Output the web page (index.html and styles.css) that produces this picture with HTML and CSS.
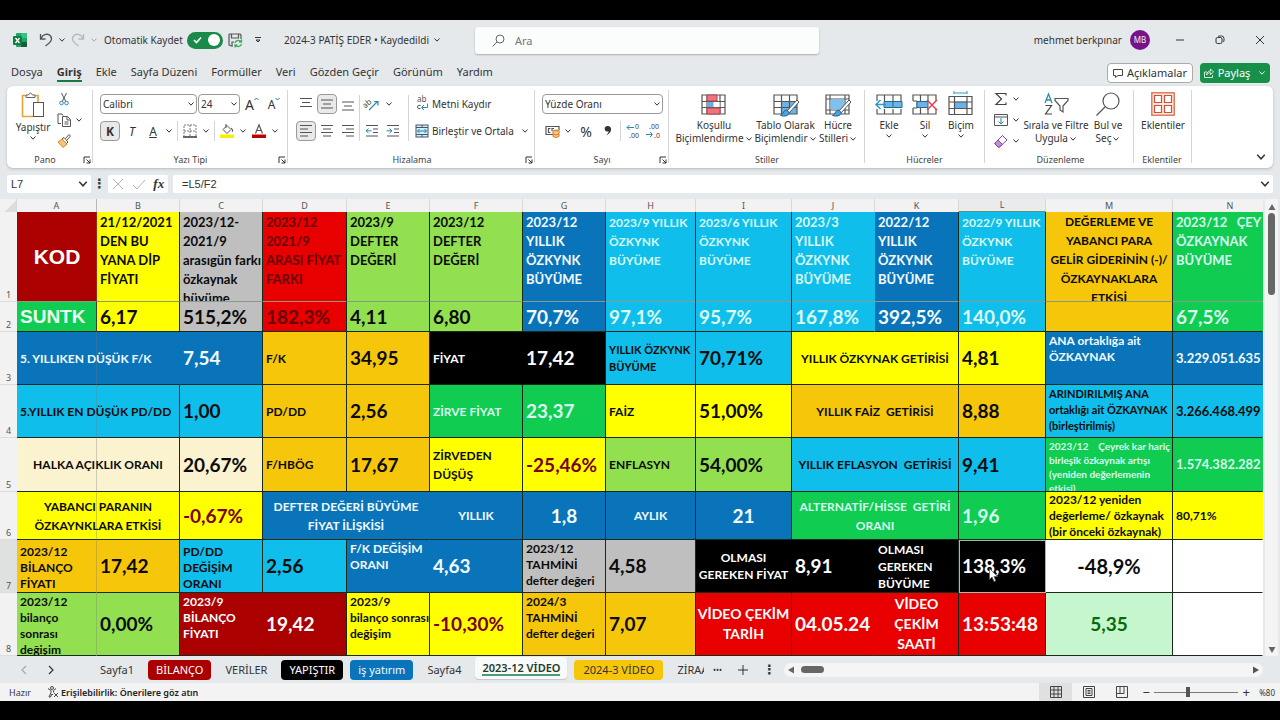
FILE: index.html
```html
<!DOCTYPE html>
<html lang="tr">
<head>
<meta charset="utf-8">
<meta name="viewport" content="width=device-width, initial-scale=1">
<title>2024-3 PATİŞ EDER</title>
<link rel="stylesheet" href="styles.css">
</head>
<body>
<svg class="defs" aria-hidden="true">
  <symbol id="chev" viewBox="0 0 8 8"><path d="M1.500 2.500 4 5.200 6.500 2.500" fill="none" stroke="currentColor"/></symbol>
  <symbol id="launch" viewBox="0 0 8 8"><path d="M1 7V1h6M3.500 3.500 7 7M7 3.500V7H3.500" fill="none" stroke="currentColor"/></symbol>
  <symbol id="grid3" viewBox="0 0 26 22"><path d="M1 1h23v19H1zM1 7.500h23M1 13.500h23M6 1v19M13 1v19M19 1v19" fill="none" stroke="#555" stroke-width="1.200"/></symbol>
</svg>
<div class="app">
  <header class="titlebar">
    <div class="quick">
      <svg class="excel" viewBox="0 0 14 14"><rect x="3" y="0" width="11" height="14" rx="1" fill="#21a366"/><path d="M8 0h5a1 1 0 0 1 1 1v4H8z" fill="#33c481"/><path d="M8 9h6v4a1 1 0 0 1-1 1H8z" fill="#185c37"/><rect y="3" width="9" height="9" rx="1" fill="#107c41"/><path d="m2.500 5 4 5m0-5-4 5" stroke="#fff" stroke-width="1.300"/></svg>
      <button class="w16" aria-label="Geri al"><svg width="14" height="14" viewBox="0 0 14 14"><path d="M1.500 1v5h5M1.800 5.600C4 1 9 0 11.500 3c3 4-1 7-5 10" fill="none" stroke="#555" stroke-width="1.300"/></svg></button>
      <button class="w12" aria-label="Geri al seçenekleri"><svg class="chev"><use href="#chev"/></svg></button>
      <button class="w16 dim" aria-label="Yinele"><svg width="14" height="14" viewBox="0 0 14 14"><path d="M12.500 1v5h-5M12.200 5.600C10 1 5 0 2.500 3c-3 4 1 7 5 10" fill="none" stroke="#b4b9bd" stroke-width="1.300"/></svg></button>
      <button class="w12 dim" aria-label="Yinele seçenekleri"><svg class="chev"><use href="#chev"/></svg></button>
      <label class="autosave"><span>Otomatik Kaydet</span><input type="checkbox" checked><span class="toggle"><svg width="9" height="8" viewBox="0 0 9 8"><path d="m1 4 2.500 2.500L8 1.500" fill="none" stroke="#fff" stroke-width="1.600"/></svg><i></i></span></label>
      <button class="w20" aria-label="Kaydet"><svg width="15" height="15" viewBox="0 0 15 15"><path d="M1 1h11l1 1v4M1 1v11l2 1h2M3.500 1v4h7V1M4 13V9h2" fill="none" stroke="#555" stroke-width="1.200"/><path d="M7 10c.5-3 5-3.500 6-1M13.500 6.500V9H11M13.500 11c-.8 3-5 3.500-6 1M7 14.500V12h2.500" fill="none" stroke="#38b45c" stroke-width="1.400"/></svg></button>
      <button class="w20" aria-label="Araç çubuğunu özelleştir"><svg class="chev" viewBox="0 0 8 8"><path d="M1 1.500h6M2 4l2 2 2-2z" fill="none" stroke="currentColor"/></svg></button>
      <button class="doc">2024-3 PATİŞ EDER • Kaydedildi <svg class="chev"><use href="#chev"/></svg></button>
    </div>
    <label class="search"><svg width="13" height="13" viewBox="0 0 13 13"><circle cx="8" cy="5" r="4" fill="none" stroke="#666"/><path d="M5 8 .5 12.500" stroke="#666"/></svg><input type="text" placeholder="Ara" aria-label="Ara"></label>
    <div class="account">
      <span>mehmet berkpınar</span><span class="avatar">MB</span>
      <button aria-label="Simge durumuna küçült"><svg width="10" height="10" viewBox="0 0 10 10"><path d="M1 5h8" stroke="#333"/></svg></button>
      <button aria-label="Geri yükle"><svg width="10" height="10" viewBox="0 0 10 10"><rect x="1" y="2.500" width="6" height="6" rx="1.500" fill="none" stroke="#333"/><path d="M3 1.500Q3.500 1 5 1h1.500Q9 1 9 3.500V5q0 1.500-.8 2" fill="none" stroke="#333"/></svg></button>
      <button aria-label="Kapat"><svg width="10" height="10" viewBox="0 0 10 10"><path d="m1 1 8 8m0-8L1 9" stroke="#333"/></svg></button>
    </div>
  </header>
  <nav class="menu">
    <a href="#">Dosya</a><a href="#" class="on">Giriş</a><a href="#">Ekle</a><a href="#">Sayfa Düzeni</a><a href="#">Formüller</a><a href="#">Veri</a><a href="#">Gözden Geçir</a><a href="#">Görünüm</a><a href="#">Yardım</a>
    <div class="actions">
      <button class="comments"><svg width="10" height="10" viewBox="0 0 10 10"><path d="M.5 1.500h9v6H5L2.500 9.500v-2h-2z" fill="none" stroke="#444"/></svg>Açıklamalar</button>
      <button class="share"><svg width="10" height="10" viewBox="0 0 10 10"><path d="M3 4H.5v5.500h8V7M2.500 7C3 4.500 4 3 6.500 3V1L9.500 4 6.500 6.500V4.700C4.500 4.700 3.500 5.500 2.500 7" fill="none" stroke="#fff" stroke-width=".8"/></svg>Paylaş<svg class="chev"><use href="#chev"/></svg></button>
    </div>
  </nav>

  <section class="ribbon" aria-label="Giriş şeridi">
    <div class="group pano">
      <div class="body">
        <button class="big wide48"><svg width="24" height="26" viewBox="0 0 24 26"><path d="M6 3.500H1.500v21H12M17 10V3.500h-4" fill="none" stroke="#e8a33d" stroke-width="1.600"/><path d="M5 5.500V3h2.500Q9.500-1 11.500 3H14v2.500z" fill="#fff" stroke="#666"/><rect x="12.500" y="10.500" width="10" height="14" fill="#fff" stroke="#555"/></svg><span>Yapıştır</span><svg class="chev"><use href="#chev"/></svg></button>
        <div class="stack">
          <button aria-label="Kes"><svg width="14" height="14" viewBox="0 0 14 14"><path d="M4.500 1 9 10M9.500 1 5 10" stroke="#555"/><circle cx="4.500" cy="11" r="1.800" fill="none" stroke="#2b8cc4"/><circle cx="9.500" cy="11" r="1.800" fill="none" stroke="#2b8cc4"/></svg></button>
          <button aria-label="Kopyala"><svg width="14" height="14" viewBox="0 0 14 14"><path d="M4 10.500H1V1h4l1 1.500M5.500 3.500h5l3 3v7h-8zM10 4v3h3M7.500 9h4M7.500 11h4" fill="none" stroke="#555"/></svg><svg class="chev"><use href="#chev"/></svg></button>
          <button aria-label="Biçim boyacısı"><svg width="14" height="14" viewBox="0 0 14 14"><path d="m1 8 4-3 5 5-4 3.500z" fill="#f6c37a" stroke="#d88620"/><path d="m5 5 2-1.500L11 8l-1.500 1.500M8.500 4.500l3.500-4 1.500 1.500-3.500 4" fill="none" stroke="#555"/></svg></button>
        </div>
      </div>
      <div class="caption"><span>Pano</span><svg class="launch"><use href="#launch"/></svg></div>
    </div>
    <div class="group yazi">
      <div class="body rows">
        <div class="line">
          <label class="pick font"><select aria-label="Yazı tipi"><option>Calibri</option></select><svg class="chev"><use href="#chev"/></svg></label>
          <label class="pick size"><select aria-label="Yazı boyutu"><option>24</option></select><svg class="chev"><use href="#chev"/></svg></label>
          <button class="w20 grow" aria-label="Yazı boyutunu artır">A<svg width="5" height="4" viewBox="0 0 5 4"><path d="M.5 3 2.500 1l2 2" fill="none" stroke="#1b7fae"/></svg></button>
          <button class="w20 shrink" aria-label="Yazı boyutunu azalt">A<svg width="5" height="4" viewBox="0 0 5 4"><path d="m.5 1 2 2 2-2" fill="none" stroke="#1b7fae"/></svg></button>
        </div>
        <div class="line">
          <button class="w20 sel bold">K</button><button class="w20 ital">T</button><button class="w20 under">A</button><button class="w12" aria-label="Altı çizili seçenekleri"><svg class="chev"><use href="#chev"/></svg></button><hr>
          <button class="w20" aria-label="Kenarlıklar"><svg width="14" height="14" viewBox="0 0 14 14"><path d="M1 1h12v12H1zM7 1v12M1 7h12" fill="none" stroke="#777" stroke-dasharray="2 1"/><path d="M0 13h14" stroke="#444" stroke-width="1.500"/></svg></button><button class="w12" aria-label="Kenarlık seçenekleri"><svg class="chev"><use href="#chev"/></svg></button><hr>
          <button class="w20" aria-label="Dolgu rengi"><svg width="14" height="14" viewBox="0 0 14 14"><path d="m3 5.500 4-4 4 4-4 4zM6 0v4M11 4c2 1 2 3 1 4" fill="none" stroke="#555"/><path d="M0 10.500h14V14H0z" fill="#f7f000"/></svg></button><button class="w12" aria-label="Dolgu seçenekleri"><svg class="chev"><use href="#chev"/></svg></button>
          <button class="w20" aria-label="Yazı rengi"><svg width="14" height="14" viewBox="0 0 14 14"><path d="M3.500 9.500 7 .8l3.500 8.700M4.500 6.500h5" fill="none" stroke="#555" stroke-width="1.200"/><path d="M0 10.500h14V14H0z" fill="#c00000"/></svg></button><button class="w12" aria-label="Yazı rengi seçenekleri"><svg class="chev"><use href="#chev"/></svg></button>
        </div>
      </div>
      <div class="caption"><span>Yazı Tipi</span><svg class="launch"><use href="#launch"/></svg></div>
    </div>
    <div class="group hiza">
      <div class="body">
        <div class="rows">
          <div class="line"><button class="w20" aria-label="Üste hizala"><svg class="ic" viewBox="0 0 14 14"><path d="M1 1.500h12M3 5.500h8M1 9.500h12"/></svg></button><button class="w20 sel" aria-label="Ortaya hizala"><svg class="ic" viewBox="0 0 14 14"><path d="M1 3h12M3 7h8M1 11h12"/></svg></button><button class="w20" aria-label="Alta hizala"><svg class="ic" viewBox="0 0 14 14"><path d="M1 5h12M3 9h8M1 13h12"/></svg></button></div>
          <div class="line"><button class="w20 sel" aria-label="Sola hizala"><svg class="ic" viewBox="0 0 14 14"><path d="M1 1.500h12M1 5h8M1 8.500h12M1 12h8"/></svg></button><button class="w20" aria-label="Ortala"><svg class="ic" viewBox="0 0 14 14"><path d="M1 1.500h12M3 5h8M1 8.500h12M3 12h8"/></svg></button><button class="w20" aria-label="Sağa hizala"><svg class="ic" viewBox="0 0 14 14"><path d="M1 1.500h12M5 5h8M1 8.500h12M5 12h8"/></svg></button></div>
        </div>
        <hr class="tall">
        <div class="rows">
          <div class="line"><button class="w20" aria-label="Yönlendirme"><svg width="14" height="14" viewBox="0 0 14 14"><text x="-2" y="8" font-size="8" transform="rotate(-42 4 7)" fill="#444">ab</text><path d="m4 13 8.500-8.500M9 4.500h4v4" fill="none" stroke="#2b8cae" stroke-width="1.200"/></svg></button><button class="w12" aria-label="Yönlendirme seçenekleri"><svg class="chev"><use href="#chev"/></svg></button></div>
          <div class="line"><button class="w20" aria-label="Girintiyi azalt"><svg class="ic" viewBox="0 0 14 14"><path d="M1 1.500h12M8 5h5M8 8.500h5M1 12h12"/><path class="tl" d="M6.500 6.800H1M3.500 4.500 1 6.800 3.500 9"/></svg></button><button class="w20" aria-label="Girintiyi artır"><svg class="ic" viewBox="0 0 14 14"><path d="M1 1.500h12M8 5h5M8 8.500h5M1 12h12"/><path class="tl" d="M.5 6.800H6M3.500 4.500 6 6.800 3.500 9"/></svg></button></div>
        </div>
        <hr class="tall gapped">
        <div class="rows">
          <div class="line"><button class="text"><svg width="14" height="14" viewBox="0 0 14 14"><text x="2" y="5" font-size="8" fill="#555">ab</text><path d="M5.500 8.500q-3-1-3 1.500t3 1.500" fill="none" stroke="#555"/><path d="M12.500 6.500v4H7M9 8l-2.500 2.500L9 13" fill="none" stroke="#2b8cae"/></svg>Metni Kaydır</button></div>
          <div class="line"><button class="text"><svg width="14" height="14" viewBox="0 0 14 14"><rect x="1" y="1" width="12" height="12" fill="#d6eefa" stroke="#456"/><path d="M1 3.500h12M1 10.500h12M7 1v2.500M7 10.500V13" stroke="#456"/><path d="M2.500 7h9M4.500 5l-2 2 2 2M9.500 5l2 2-2 2" fill="none" stroke="#1a84b8"/></svg>Birleştir ve Ortala</button><button class="w12" aria-label="Birleştirme seçenekleri"><svg class="chev"><use href="#chev"/></svg></button></div>
        </div>
      </div>
      <div class="caption"><span>Hizalama</span><svg class="launch"><use href="#launch"/></svg></div>
    </div>
    <div class="group sayi">
      <div class="body rows">
        <div class="line"><label class="pick fmt"><select aria-label="Sayı biçimi"><option>Yüzde Oranı</option></select><svg class="chev"><use href="#chev"/></svg></label></div>
        <div class="line">
          <button class="w20" aria-label="Para birimi"><svg width="15" height="14" viewBox="0 0 15 14"><path d="M8 10.500H1v-8h13v4M5.500 4.500H3.500v4h2M9 4.500H7v2.500" fill="none" stroke="#555" stroke-width="1.200"/><ellipse cx="11" cy="7.500" rx="3" ry="1.500" fill="#f4a340" stroke="#d87a20"/><path d="M8 7.500v5q3 2 6 0v-5M8 10q3 2 6 0" fill="#f8c88c" stroke="#d87a20"/></svg></button><button class="w12" aria-label="Para birimi seçenekleri"><svg class="chev"><use href="#chev"/></svg></button>
          <button class="w20 pct">%</button><button class="w20 comma" aria-label="Virgül biçimi"><svg width="8" height="12" viewBox="0 0 8 12"><path d="M4 1a2.800 2.800 0 1 0 .8 5.200Q4.500 8.500 2 10.500 7.500 8 7 3.800 6.500 1 4 1z" fill="#333"/></svg></button><hr>
          <button class="w20" aria-label="Ondalık artır"><svg width="14" height="14" viewBox="0 0 14 14"><text x="9" y="5" font-size="7" fill="#444">0</text><text x="3" y="14" font-size="7" fill="#444">.00</text><path d="M8 3.500H1M3.500 1 1 3.500 3.500 6" fill="none" stroke="#2b8cae"/></svg></button><button class="w20" aria-label="Ondalık azalt"><svg width="14" height="14" viewBox="0 0 14 14"><text x="3" y="5" font-size="7" fill="#444">.00</text><text x="8" y="14" font-size="7" fill="#444">.0</text><path d="M0 10.500h6M4 8l2.500 2.500L4 13" fill="none" stroke="#2b8cae"/></svg></button>
        </div>
      </div>
      <div class="caption"><span>Sayı</span><svg class="launch"><use href="#launch"/></svg></div>
    </div>
    <div class="group stil">
      <div class="body">
        <button class="big wide76"><svg class="bigic" viewBox="0 0 26 22"><use href="#grid3" width="26" height="22"/><path d="M6 1h10v6H6zM6 14h13v6H6z" fill="#f2727d" stroke="#b04450"/><path d="M6 8h6v5H6z" fill="#6aaede"/><path d="M12.500 8h6v5h-6z" fill="#fff"/></svg><span>Koşullu</span><span>Biçimlendirme<svg class="chev"><use href="#chev"/></svg></span></button>
        <button class="big wide66"><svg class="bigic" viewBox="0 0 26 22"><path d="M8 8h16v12H8z" fill="#6ab4ea"/><path d="M1 1h23v19H1zM1 7.500h23M1 13.500h23M8.500 1v19M16.500 1v19" fill="none" stroke="#555" stroke-width="1.200"/><path d="M24 6 14 17l2 2L26 8z" fill="#fff" stroke="#555"/><path d="M14 16q-3 0-4 3-1 2-2.500 2.500Q14 23.500 16.500 19z" fill="#4da3df" stroke="#27658c"/></svg><span>Tablo Olarak</span><span>Biçimlendir<svg class="chev"><use href="#chev"/></svg></span></button>
        <button class="big wide40"><svg class="bigic" viewBox="0 0 26 22"><path d="M1 1h23v19H1zM1 5h23M1 16h23M5 1v19M20 1v19" fill="none" stroke="#555" stroke-width="1.200"/><path d="M5.500 5.500h14v10h-14z" fill="#80c0ef"/><path d="M24 6 14 17l2 2L26 8z" fill="#fff" stroke="#555"/><path d="M14 16q-3 0-4 3-1 2-2.500 2.500Q14 23.500 16.500 19z" fill="#4da3df" stroke="#27658c"/></svg><span>Hücre</span><span>Stilleri<svg class="chev"><use href="#chev"/></svg></span></button>
      </div>
      <div class="caption"><span>Stiller</span></div>
    </div>
    <div class="group hucre">
      <div class="body">
        <button class="big wide36"><svg class="bigic" viewBox="0 0 26 22"><path d="M1 7V1h24v6M1 15v5h24v-5M8.500 1v6M17 1v6M8.500 15v5M17 15v5" fill="none" stroke="#555" stroke-width="1.200"/><path d="M8 7.500h18v6H8z" fill="#6ab4ea" stroke="#28698f"/><path d="M17 7v7" stroke="#28698f"/><path d="M10 10.500H0M4.500 6 0 10.500 4.500 15" fill="none" stroke="#2b9cc4" stroke-width="1.500"/></svg><span>Ekle</span><svg class="chev"><use href="#chev"/></svg></button>
        <button class="big wide36"><svg class="bigic" viewBox="0 0 26 22"><path d="M1 7V1h23v6M1 14v6h23v-5M8.500 1v6M16 1v6M8.500 14v6M16 14v6" fill="none" stroke="#555" stroke-width="1.200"/><path d="M1 7h4v7H1" fill="none" stroke="#555"/><path d="M5 7.500h11v6H5z" fill="#6ab4ea" stroke="#28698f"/><path d="m15 6 10 10m0-10L15 16" stroke="#e0424d" stroke-width="1.500"/></svg><span>Sil</span><svg class="chev"><use href="#chev"/></svg></button>
        <button class="big wide36"><svg class="bigic" viewBox="0 0 26 22"><path d="M6 7.500h13v7H6z" fill="#6ab4ea"/><path d="M1 2.500h23v18H1zM1 8h23M1 14.500h23M6.500 2.500v18M19 2.500v18" fill="none" stroke="#555" stroke-width="1.200"/><path d="M6 -1h13M6-3v3M19-3v3" stroke="#2b9cc4"/></svg><span>Biçim</span><svg class="chev"><use href="#chev"/></svg></button>
      </div>
      <div class="caption"><span>Hücreler</span></div>
    </div>
    <div class="group duzen">
      <div class="body">
        <div class="stack">
          <button aria-label="Otomatik toplam"><svg width="14" height="14" viewBox="0 0 14 14"><path d="M12 3.500V1.500H2L7.500 7 2 12.500h10v-2" fill="none" stroke="#444" stroke-width="1.200"/></svg><svg class="chev"><use href="#chev"/></svg></button>
          <button aria-label="Dolgu"><svg width="14" height="14" viewBox="0 0 14 14"><path d="M.5 1.500h13v11H.5zM.5 4h13" fill="none" stroke="#555"/><path d="M7 5v6M4.500 8.500 7 11l2.500-2.500" fill="none" stroke="#2085ad"/></svg><svg class="chev"><use href="#chev"/></svg></button>
          <button aria-label="Temizle"><svg width="14" height="14" viewBox="0 0 14 14"><path d="M1 9 8.500 1.500 13 6l-7.500 7H4L1 10z" fill="#fff" stroke="#84479b"/><path d="m1 9 3-3 4.500 4.500-3 2.500H4L1 10z" fill="#c98adb" stroke="#84479b"/></svg><svg class="chev"><use href="#chev"/></svg></button>
        </div>
        <button class="big wide68"><svg width="26" height="24" viewBox="0 0 26 24"><path d="M2 11 5.500 2 9 11M3.300 8h4.500" fill="none" stroke="#2b8cae" stroke-width="1.300"/><path d="M2.500 13.500h6l-6 8.500h6.500" fill="none" stroke="#444" stroke-width="1.200"/><path d="M12 6.500h13v2L20 14v6l-3-2v-4L12 8.500z" fill="none" stroke="#555" stroke-width="1.200"/></svg><span>Sırala ve Filtre</span><span>Uygula<svg class="chev"><use href="#chev"/></svg></span></button>
        <button class="big wide36"><svg width="26" height="24" viewBox="0 0 26 24"><circle cx="16" cy="9" r="8" fill="none" stroke="#555" stroke-width="1.200"/><path d="m10 15-8.500 8.500" stroke="#555" stroke-width="1.200"/></svg><span>Bul ve</span><span>Seç<svg class="chev"><use href="#chev"/></svg></span></button>
      </div>
      <div class="caption"><span>Düzenleme</span></div>
    </div>
    <div class="group eklenti">
      <div class="body">
        <button class="big wide48"><svg width="24" height="24" viewBox="0 0 24 24"><rect x=".8" y=".8" width="22.400" height="22.400" fill="#fde6dc" stroke="#d9694a" stroke-width="1.300"/><path d="M3.500 3.500h7v7h-7zM13.500 3.500h7v7h-7zM3.500 13.500h7v7h-7zM13.500 13.500h7v7h-7z" fill="#fff" stroke="#c4553a" stroke-width="1.200"/></svg><span>Eklentiler</span></button>
      </div>
      <div class="caption"><span>Eklentiler</span></div>
    </div>
    <button class="collapse" aria-label="Şeridi daralt"><svg width="12" height="12"><use href="#chev"/></svg></button>
  </section>

  <div class="formula">
    <label class="namebox"><input type="text" value="L7" aria-label="Ad kutusu"><svg width="12" height="12"><use href="#chev"/></svg></label>
    <span class="vdots">⋮</span>
    <div class="fxbox"><button aria-label="İptal"><svg width="12" height="12" viewBox="0 0 12 12"><path d="m1 1 10 10m0-10L1 11" stroke="#b5b5b5"/></svg></button><button aria-label="Gir"><svg width="14" height="12" viewBox="0 0 14 12"><path d="m1 7 4 4 8-9" fill="none" stroke="#b5b5b5"/></svg></button><button class="fx">fx</button></div>
    <label class="fbar"><input type="text" value="=L5/F2" aria-label="Formül çubuğu"><svg width="12" height="12"><use href="#chev"/></svg></label>
  </div>

  <main class="sheet">
    <div class="cells">
      <table>
        <colgroup><col class="k0"><col class="k80"><col class="k83"><col class="k83"><col class="k84"><col class="k83"><col class="k93"><col class="k83"><col class="k90"><col class="k96"><col class="k83"><col class="k84"><col class="k87"><col class="k127"><col></colgroup>
        <thead><tr><th class="corner"></th><th>A</th><th>B</th><th>C</th><th>D</th><th>E</th><th>F</th><th>G</th><th>H</th><th>I</th><th>J</th><th>K</th><th class="cur">L</th><th>M</th><th class="wn">N</th></tr></thead>
        <tbody>
        <tr class="r1"><th><div>1</div></th>
          <td class="maroon kod mid nb"><div>KOD</div></td>
          <td class="yellow"><div>21/12/2021<br>DEN BU<br>YANA DİP<br>FİYATI</div></td>
          <td class="gray"><div>2023/12-<br>2021/9<br>arasıgün farkı<br>özkaynak<br>büyüme</div></td>
          <td class="red darktext"><div>2023/12<br>2021/9<br>ARASI FİYAT<br>FARKI</div></td>
          <td class="lime"><div>2023/9<br>DEFTER<br>DEĞERİ</div></td>
          <td class="lime"><div>2023/12<br>DEFTER<br>DEĞERİ</div></td>
          <td class="blue"><div>2023/12<br>YILLIK<br>ÖZKYNK<br>BÜYÜME</div></td>
          <td class="cyan pale caps"><div>2023/9 YILLIK<br>ÖZKYNK<br>BÜYÜME</div></td>
          <td class="cyan pale caps"><div>2023/6 YILLIK<br>ÖZKYNK<br>BÜYÜME</div></td>
          <td class="cyan pale nb"><div>2023/3<br>YILLIK<br>ÖZKYNK<br>BÜYÜME</div></td>
          <td class="blue"><div>2022/12<br>YILLIK<br>ÖZKYNK<br>BÜYÜME</div></td>
          <td class="cyan pale caps"><div>2022/9 YILLIK<br>ÖZKYNK<br>BÜYÜME</div></td>
          <td class="orange ctr caps"><div>DEĞERLEME VE<br>YABANCI PARA<br>GELİR GİDERİNİN (-)/<br>ÖZKAYNAKLARA<br>ETKİSİ</div></td>
          <td class="green pale nb"><div>2023/12   ÇEYREK<br>ÖZKAYNAK<br>BÜYÜME</div></td></tr>
        <tr class="r2"><th><div>2</div></th>
          <td class="green suntk mid"><div>SUNTK</div></td><td class="yellow num"><div>6,17</div></td><td class="gray num"><div>515,2%</div></td><td class="red num darktext"><div>182,3%</div></td><td class="lime num"><div>4,11</div></td><td class="lime num"><div>6,80</div></td><td class="blue num"><div>70,7%</div></td><td class="cyan pale num"><div>97,1%</div></td><td class="cyan pale num"><div>95,7%</div></td><td class="cyan pale num nb"><div>167,8%</div></td><td class="blue num"><div>392,5%</div></td><td class="cyan pale num"><div>140,0%</div></td><td class="orange"><div></div></td><td class="green pale num nb"><div>67,5%</div></td></tr>
        <tr class="r3"><th><div>3</div></th>
          <td colspan="2" class="blue mid nb"><div>5. YILLIKEN DÜŞÜK F/K</div></td><td class="blue num"><div>7,54</div></td><td class="orange mid"><div>F/K</div></td><td class="orange num"><div>34,95</div></td><td class="black mid nb"><div>FİYAT</div></td><td class="black num"><div>17,42</div></td><td class="cyan small17 mid"><div>YILLIK ÖZKYNK<br>BÜYÜME</div></td><td class="cyan num"><div>70,71%</div></td><td colspan="2" class="yellow mid ctr"><div>YILLIK ÖZKYNAK GETİRİSİ</div></td><td class="yellow num"><div>4,81</div></td><td class="blue small"><div>ANA ortaklığa ait<br>ÖZKAYNAK</div></td><td class="blue mid long nb"><div>3.229.051.635</div></td></tr>
        <tr class="r4"><th><div>4</div></th>
          <td colspan="2" class="cyan mid"><div>5.YILLIK EN DÜŞÜK PD/DD</div></td><td class="cyan num"><div>1,00</div></td><td class="orange mid"><div>PD/DD</div></td><td class="orange num"><div>2,56</div></td><td class="green pale mid"><div>ZİRVE FİYAT</div></td><td class="green pale num"><div>23,37</div></td><td class="yellow mid"><div>FAİZ</div></td><td class="yellow num"><div>51,00%</div></td><td colspan="2" class="orange mid ctr"><div>YILLIK FAİZ  GETİRİSİ</div></td><td class="orange num"><div>8,88</div></td><td class="cyan small16"><div>ARINDIRILMIŞ ANA<br>ortaklığı ait ÖZKAYNAK<br>(birleştirilmiş)</div></td><td class="cyan mid long nb"><div>3.266.468.499</div></td></tr>
        <tr class="r5"><th><div>5</div></th>
          <td colspan="2" class="cream mid ctr"><div>HALKA AÇIKLIK ORANI</div></td><td class="cream num"><div>20,67%</div></td><td class="orange mid"><div>F/HBÖG</div></td><td class="orange num"><div>17,67</div></td><td class="yellow mid"><div>ZİRVEDEN<br>DÜŞÜŞ</div></td><td class="yellow num neg"><div>-25,46%</div></td><td class="lime mid"><div>ENFLASYN</div></td><td class="lime num"><div>54,00%</div></td><td colspan="2" class="cyan mid ctr"><div>YILLIK EFLASYON  GETİRİSİ</div></td><td class="cyan num"><div>9,41</div></td><td class="green pale tiny"><div>2023/12    Çeyrek kar hariç<br>birleşik özkaynak artışı<br>(yeniden değerlemenin<br>etkisi)</div></td><td class="green pale mid long nb"><div>1.574.382.282</div></td></tr>
        <tr class="r6"><th><div>6</div></th>
          <td colspan="2" class="yellow mid ctr"><div>YABANCI PARANIN<br>ÖZKAYNKLARA ETKİSİ</div></td><td class="yellow num neg"><div>-0,67%</div></td><td colspan="2" class="blue mid ctr nb"><div>DEFTER DEĞERİ BÜYÜME<br>FİYAT İLİŞKİSİ</div></td><td class="blue mid ctr"><div>YILLIK</div></td><td class="blue num ctr"><div>1,8</div></td><td class="blue mid ctr"><div>AYLIK</div></td><td class="blue num ctr"><div>21</div></td><td colspan="2" class="green pale mid ctr"><div>ALTERNATİF/HİSSE  GETİRİ<br>ORANI</div></td><td class="green pale num"><div>1,96</div></td><td class="yellow small mid"><div>2023/12 yeniden<br>değerleme/ özkaynak<br>(bir önceki özkaynak)</div></td><td class="yellow mid small nb"><div>80,71%</div></td></tr>
        <tr class="r7"><th class="cur"><div>7</div></th>
          <td class="orange small bot nb"><div>2023/12<br>BİLANÇO<br>FİYATI</div></td><td class="orange num"><div>17,42</div></td><td class="cyan small bot"><div>PD/DD<br>DEĞİŞİM<br>ORANI</div></td><td class="cyan num"><div>2,56</div></td><td class="blue small nb"><div>F/K DEĞİŞİM<br>ORANI</div></td><td class="blue num"><div>4,63</div></td><td class="gray small"><div>2023/12<br>TAHMİNİ<br>defter değeri</div></td><td class="gray num"><div>4,58</div></td><td class="black caps17 mid ctr nb"><div>OLMASI<br>GEREKEN FİYAT</div></td><td class="black num nb"><div>8,91</div></td><td class="black caps17 mid"><div>OLMASI<br>GEREKEN<br>BÜYÜME</div></td><td class="black num active"><div>138,3%</div><svg class="pointer" viewBox="0 0 9 14"><path d="M.5.5v11L3 9l2 4.500 1.800-.8L5 8.500h3.500z" fill="#fff" stroke="#555" stroke-width=".7"/></svg></td><td class="white num big20 ctr"><div>-48,9%</div></td><td class="white nb"><div></div></td></tr>
        <tr class="r8"><th><div>8</div></th>
          <td class="lime small nb"><div>2023/12<br>bilanço<br>sonrası<br>değişim</div></td><td class="lime num"><div>0,00%</div></td><td class="maroon small nb"><div>2023/9<br>BİLANÇO<br>FİYATI</div></td><td class="maroon num"><div>19,42</div></td><td class="yellow small"><div>2023/9<br>bilanço sonrası<br>değişim</div></td><td class="yellow num neg"><div>-10,30%</div></td><td class="orange small"><div>2024/3<br>TAHMİNİ<br>defter değeri</div></td><td class="orange num"><div>7,07</div></td><td class="red video mid ctr"><div>VİDEO ÇEKİM<br>TARİH</div></td><td class="red num nb"><div>04.05.24</div></td><td class="red video mid ctr"><div>VİDEO<br>ÇEKİM<br>SAATİ</div></td><td class="red num"><div>13:53:48</div></td><td class="mint num ctr"><div>5,35</div></td><td class="white nb"><div></div></td></tr>
        </tbody>
      </table>
      <i class="freeze"></i>
    </div>
    <div class="vscroll"><svg width="8" height="8" viewBox="0 0 8 8"><path d="M4 1 7.500 7h-7z" fill="#666"/></svg><i></i><svg width="8" height="8" viewBox="0 0 8 8"><path d="M4 7 7.500 1h-7z" fill="#666"/></svg></div>
  </main>

  <nav class="tabs">
    <button class="nav dim" aria-label="Önceki sayfa"><svg width="8" height="10" viewBox="0 0 8 10"><path d="M6 1 2 5l4 4" fill="none" stroke="currentColor" stroke-width="1.200"/></svg></button>
    <button class="nav" aria-label="Sonraki sayfa"><svg width="8" height="10" viewBox="0 0 8 10"><path d="m2 1 4 4-4 4" fill="none" stroke="currentColor" stroke-width="1.200"/></svg></button>
    <button class="tab first">Sayfa1</button><button class="tab maroon">BİLANÇO</button><button class="tab">VERİLER</button><button class="tab black">YAPIŞTIR</button><button class="tab blue">iş yatırım</button><button class="tab">Sayfa4</button><button class="tab current"><span>2023-12 VİDEO</span></button><button class="tab orange wide">2024-3 VİDEO</button><button class="tab cut">ZİRAAT</button>
    <button class="tool" aria-label="Diğer sayfalar">•••</button><button class="tool plus" aria-label="Yeni sayfa"><svg width="10" height="10" viewBox="0 0 10 10"><path d="M5 0v10M0 5h10" stroke="#333"/></svg></button><span class="tool vdots">⋮</span>
    <div class="hscroll"><svg width="8" height="8" viewBox="0 0 8 8"><path d="M1 4 7 .5v7z" fill="#666"/></svg><i></i><svg class="end" width="8" height="8" viewBox="0 0 8 8"><path d="M7 4 1 .5v7z" fill="#555"/></svg></div>
  </nav>
  <footer class="status">
    <span>Hazır</span>
    <svg width="12" height="12" viewBox="0 0 12 12"><circle cx="5" cy="2" r="1.500" fill="none" stroke="#444"/><path d="M1 2.500 4 4.500v2L2 11h1.500L5 8l1 1M9 2.500 6.500 4.500v2M7 7l4 4M11 7l-4 4" fill="none" stroke="#444"/></svg>
    <button class="access">Erişilebilirlik: Önerilere göz atın</button>
    <div class="views">
      <button class="on" aria-label="Normal"><svg width="12" height="12" viewBox="0 0 12 12"><path d="M.5.5h11v11H.5zM.5 4h11M.5 8h11M4 .5v11M8 .5v11" fill="none" stroke="#444"/></svg></button>
      <button aria-label="Sayfa düzeni"><svg width="12" height="12" viewBox="0 0 12 12"><path d="M.5.5h11v11H.5zM3 2.500h6v7H3zM4.500 4.500h3M4.500 6h3M4.500 7.500h3" fill="none" stroke="#444"/></svg></button>
      <button aria-label="Sayfa sonu önizleme"><svg width="12" height="12" viewBox="0 0 12 12"><path d="M.5.5h11v11H.5zM.5 7.500h7.500v-7M4 .5v7" fill="none" stroke="#444"/></svg></button>
      <button class="z" aria-label="Uzaklaştır">−</button>
      <input type="range" min="0" max="100" value="40" aria-label="Yakınlaştırma">
      <button class="z" aria-label="Yakınlaştır">+</button><span>%80</span>
    </div>
  </footer>
</div>
</body>
</html>
```

FILE: styles.css
```css
* { box-sizing: border-box; }
body { margin: 0; background: #000; color: #333; font: 10px/13px "Noto Sans", "Open Sans", sans-serif; }
button, input, select { font: inherit; color: inherit; border: 0; padding: 0; margin: 0; background: none; }
button { display: inline-flex; align-items: center; justify-content: center; white-space: nowrap; flex: none; }
a { color: inherit; text-decoration: none; }
svg { flex: none; overflow: visible; }
.defs { position: absolute; width: 0; height: 0; }
.chev, .launch { width: 8px; height: 8px; color: #333; }
.dim, .dim .chev { color: #a5a9ad; }
.app { min-height: 100vh; border: solid #000; border-width: 20px 0; background: #e5e9ec; display: flex; flex-direction: column; overflow: hidden; }
.w12 { width: 12px; } .w16 { width: 16px; } .w20 { width: 20px; }

.titlebar { display: flex; align-items: center; height: 40px; flex: none; }
.quick { flex: 0 0 475px; display: flex; align-items: center; padding-left: 13px; }
.excel { width: 14px; height: 14px; margin-right: 11px; }
.quick .w12 { margin: 0 2px; }
.autosave { display: flex; align-items: center; gap: 4px; margin: 0 3px 0 2px; position: relative; white-space: nowrap; }
.autosave input { position: absolute; right: 0; width: 36px; height: 17px; opacity: 0; }
.toggle { width: 36px; height: 17px; border-radius: 9px; background: #1a8a48; display: flex; align-items: center; justify-content: space-between; padding: 0 3px 0 6px; }
.toggle i { width: 12px; height: 12px; border-radius: 50%; background: #fff; }
.quick .w20 + .w20 { margin-left: 2px; }
.doc { margin-left: auto; margin-right: 34px; gap: 4px; }
.search { flex: 0 1 344px; height: 27px; border-radius: 3px; background: #fbfcfc; box-shadow: 0 1px 2px #a9adb1; display: flex; align-items: center; gap: 10px; padding-left: 17px; }
.search input { flex: 1; min-width: 0; font-size: 11px; outline: 0; }
.search input::placeholder { color: #777; opacity: 1; }
.account { margin-left: auto; display: flex; align-items: center; white-space: nowrap; }
.avatar { width: 20px; height: 20px; line-height: 20px; border-radius: 50%; background: #77128a; color: #eee; text-align: center; font-size: 8px; margin: 0 10px 0 8px; }
.account button { width: 40px; height: 30px; }

.menu { display: flex; align-items: center; height: 26px; padding: 0 10px 0 11px; gap: 14px; font-size: 11px; line-height: 16px; white-space: nowrap; flex: none; }
.menu a { border-bottom: 2px solid transparent; }
.menu .on { font-weight: 700; border-color: #1a7a45; }
.actions { margin-left: auto; display: flex; gap: 7px; }
.actions button { height: 20px; border-radius: 4px; gap: 4px; }
.comments { border: 1px solid #aaa; background: #fff; width: 86px; }
.share { background: #17904a; color: #fff; width: 70px; }
.share .chev { color: #fff; margin-left: 4px; }

.ribbon { display: flex; margin: 0 7px; height: 82px; background: #fff; border-radius: 6px; box-shadow: 0 1px 3px #b5babf; flex: none; }
.group { position: relative; display: flex; flex-direction: column; padding: 5px 0 0 7px; }
.group::after { content: ""; position: absolute; right: 0; top: 4px; bottom: 5px; width: 1px; background: #d5d5d5; }
.body { display: flex; height: 62px; align-items: flex-start; }
.caption { margin-left: -7px; display: flex; justify-content: center; position: relative; font-size: 9px; line-height: 14px; color: #444; }
.caption .launch { position: absolute; right: 2px; top: 3px; }
.pano { flex: 0 0 86px; padding-left: 2px; } .pano .caption { margin-left: -12px; }
.yazi { flex: 0 0 195px; } .hiza { flex: 0 0 247px; padding-left: 8px; } .sayi { flex: 0 0 134px; }
.stil { flex: 0 0 196px; } .hucre { flex: 0 0 120px; padding-left: 6px; } .duzen { flex: 0 0 149px; padding-left: 9px; } .eklenti { flex: 0 0 58px; padding-left: 5px; }
.big { flex-direction: column; justify-content: flex-start; line-height: 13px; padding-top: 3px; }
.big > svg:first-child { margin-bottom: 3px; }
.big > svg:first-child:not(.bigic) { margin-top: -2px; }
.big span { display: flex; align-items: center; gap: 1px; }
.bigic { width: 26px; height: 22px; }
.wide48 { width: 48px; } .wide76 { width: 76px; } .wide66 { width: 67px; } .wide40 { width: 38px; } .wide36 { width: 36px; } .wide68 { width: 68px; }
.stack { display: flex; flex-direction: column; gap: 7px; padding-top: 1px; width: 28px; }
.stack button { height: 14px; width: 26px; justify-content: flex-start; gap: 4px; }
.rows { display: flex; flex-direction: column; gap: 7px; padding-top: 3px; }
.line { display: flex; align-items: center; height: 20px; gap: 1px; }
.yazi .line, .sayi .line { gap: 0; }
hr { border: 0; width: 1px; height: 20px; background: #d5d5d5; margin: 0 2px; }
.tall { height: 46px; margin: 4px 2px 0 1px; } .gapped { margin: 4px 6px 0 5px; }
.line button { height: 20px; }
.sel { border: 1px solid #999; border-radius: 4px; background: #e9e9e9; }
.bold { font-weight: 700; font-size: 12px; margin-right: 2px; }
.ital { font-style: italic; font-size: 12px; }
.under { font-size: 12px; text-decoration: underline; margin-left: 1px; }
.grow { font-size: 14px; margin-left: 2px; } .shrink { font-size: 12px; margin-left: 2px; }
.line .grow svg, .line .shrink svg { align-self: flex-start; margin-top: 3px; }
.pick { position: relative; height: 20px; border: 1px solid #999; border-radius: 4px; background: #fff; }
.pick select { appearance: none; width: 100%; height: 18px; padding-left: 2px; outline: 0; }
.pick .chev { position: absolute; right: 1px; top: 5px; pointer-events: none; }
.font { width: 97px; } .size { width: 42px; margin-left: 1px; } .fmt { width: 121px; }
.ic { width: 14px; height: 14px; fill: none; stroke: #555; stroke-width: 1px; }
.ic .tl { stroke: #2b8cae; }
.text { gap: 3px; margin-right: 4px; }
.pct { font-size: 14px; margin-left: 2px; } .comma { margin-left: 2px; }
.collapse { margin: auto 6px 5px auto; }

.formula { display: flex; align-items: center; height: 18px; margin: 7px 7px 6px; flex: none; }
.namebox, .fbar { display: flex; align-items: center; background: #fff; height: 18px; border-radius: 2px; padding: 0 2px 0 4px; font: 11px/16px "Liberation Sans", sans-serif; }
.namebox { width: 84px; } .fbar { flex: 1; padding-left: 9px; }
.formula input { flex: 1; min-width: 0; outline: 0; }
.formula .vdots { width: 17px; text-align: center; font: 700 13px/16px "DejaVu Sans", sans-serif; }
.fxbox { display: flex; justify-content: space-around; background: #fff; height: 18px; width: 60px; margin-right: 5px; border-radius: 2px; }
.fx { font: italic 700 13px/16px "Liberation Serif", serif; }

.sheet { display: flex; flex: none; }
.cells { flex: 1; min-width: 0; overflow: hidden; position: relative; }
table { width: 100%; table-layout: fixed; border-collapse: separate; border-spacing: 0; color: #0b0b0b; font: 700 13px/19px Lato, "Noto Sans", sans-serif; white-space: pre; }
.k0 { width: 17px; } .k80 { width: 80px; } .k83 { width: 83px; } .k84 { width: 84px; } .k87 { width: 87px; } .k90 { width: 90px; } .k93 { width: 93px; } .k96 { width: 96px; } .k127 { width: 127px; }
th { padding: 0; font: 9px/13px "Noto Sans", sans-serif; color: #555; background: #f2f2f2; border-right: 1px solid #d8d8d8; }
thead th { height: 13px; }
thead .cur { background: #e9eceb; border-bottom: 1px solid #5f9478; line-height: 12px; }
tbody .cur { background: #dfe1e1; }
.wn { padding-left: 24px; border-right: 0; }
.corner { background: linear-gradient(135deg, #f2f2f2 60%, #dcdcdc 60%); }
tbody th { border-bottom: 1px solid #ddd; border-right: 0; }
tbody th div { display: flex; align-items: flex-end; justify-content: center; }
td { padding: 0; border-right: 1px solid #1a2a1a; border-bottom: 1px solid #1a2a1a; overflow: hidden; }
td > div { padding: 1px 2px 0 3px; overflow: hidden; }
.nb { border-right-color: transparent; }
.r1 div { height: 89px; } .r2 div { height: 29px; } .r3 div, .r4 div, .r7 div { height: 52px; } .r5 div { height: 53px; } .r6 div { height: 47px; } .r8 div { height: 62px; }
.r1 td { border-bottom-color: #8a9a8a; }
.mid > div, .num > div, .bot > div { display: flow-root; align-content: center; padding-top: 0; }
.bot > div { align-content: end; }
.ctr > div { text-align: center; padding: 0; }
.caps, .mid { font-size: 12px; }
.long { font-size: 13px; }
.num { font-size: 19px; line-height: 24px; }
.big20 { font-size: 20px; }
.small { font-size: 12px; line-height: 16px; } .small16 { font-size: 11px; line-height: 16px; } .small17, .caps17 { font-size: 11px; line-height: 17px; } .caps17 { font-size: 12px; }
.tiny { font-size: 10px; line-height: 14px; }
.video { font-size: 14px; line-height: 20px; }
.kod { font: 700 21px/26px "Liberation Sans", sans-serif; text-align: center; }
.suntk { font: 700 19px/24px "Liberation Sans", sans-serif; }
.yellow { background: #ff0; } .gray { background: #bfbfbf; } .lime { background: #92e050; } .cyan { background: #10beec; } .orange { background: #f5c60a; } .cream { background: #fbf2cf; } .white { background: #fff; }
.red { background: #e80000; color: #fff; } .maroon { background: #aa0000; color: #fff; } .blue { background: #0a74ba; color: #f2fbff; } .green { background: #10cc50; color: #e8fff0; } .black { background: #000; color: #fff; }
.mint { background: #c6f6cd; color: #086a08; }
.pale { color: #d9fbf3; } .darktext { color: #660000; } .neg { color: #7a0018; }
.active { position: relative; outline: 1px solid #9dbfab; outline-offset: -1px; overflow: visible; }
.pointer { position: absolute; left: 30px; top: 28px; width: 9px; height: 14px; }
.freeze { position: absolute; left: 96px; top: 0; bottom: 0; width: 1px; background: #7775; }
.vscroll { width: 17px; padding: 4px 0 2px; display: flex; flex-direction: column; align-items: center; background: linear-gradient(90deg, #e5e9ec 2px, #f4f4f4 2px, #f4f4f4 15px, #e5e9ec 15px); }
.vscroll i { width: 7px; height: 82px; border-radius: 4px; background: #666; margin: 2px 0 auto; }

.tabs { display: flex; align-items: center; height: 27px; padding-left: 10px; font-size: 11px; flex: none; }
.nav { width: 27px; }
.tab { height: 20px; padding: 0 7px; margin: 0 3px 0 4px; border-radius: 4px; }
.first { margin-left: 29px; }
.tab.maroon, .tab.black, .tab.blue { padding: 0 8px; } .tab.wide { padding: 0 9px; }
.tab.current { background: #f8f9f9; box-shadow: 0 1px 1px #c2c5c8; margin-top: -3px; height: 22px; font-weight: 600; color: #23392d; }
.current span { border-bottom: 2px solid #4a9a72; }
.cut { width: 34px; overflow: hidden; justify-content: flex-start; padding-right: 0; margin-right: 0; }
.tool { width: 26px; justify-content: center; font-size: 8px; text-align: center; }
.tool.vdots { font: 700 13px/16px "DejaVu Sans", sans-serif; }
.hscroll { flex: 1; height: 14px; border-radius: 7px; background: #f5f5f5; margin: 0 17px 0 2px; padding: 0 3px; display: flex; align-items: center; gap: 6px; }
.hscroll i { width: 23px; height: 7px; border-radius: 4px; background: #666; }
.end { margin-left: auto; }

.status { display: flex; align-items: center; height: 18px; background: #f3f3f3; padding: 0 5px 0 9px; font-size: 9px; flex: none; margin-bottom: auto; }
.status > svg { margin: 0 2px 0 16px; }
.access { font-weight: 600; color: #222; }
.views { margin-left: auto; display: flex; align-items: center; }
.views button { width: 33px; height: 18px; }
.views .on { background: #e0e0e0; }
.views .z { width: 16px; font-size: 13px; }
.views input { appearance: none; width: 84px; height: 12px; background: linear-gradient(#777, #777) 0 50% / 100% 1px no-repeat; }
.views input::-webkit-slider-thumb { appearance: none; width: 4px; height: 10px; background: #555; }
.views span { margin-left: 5px; font-size: 8px; }
```
